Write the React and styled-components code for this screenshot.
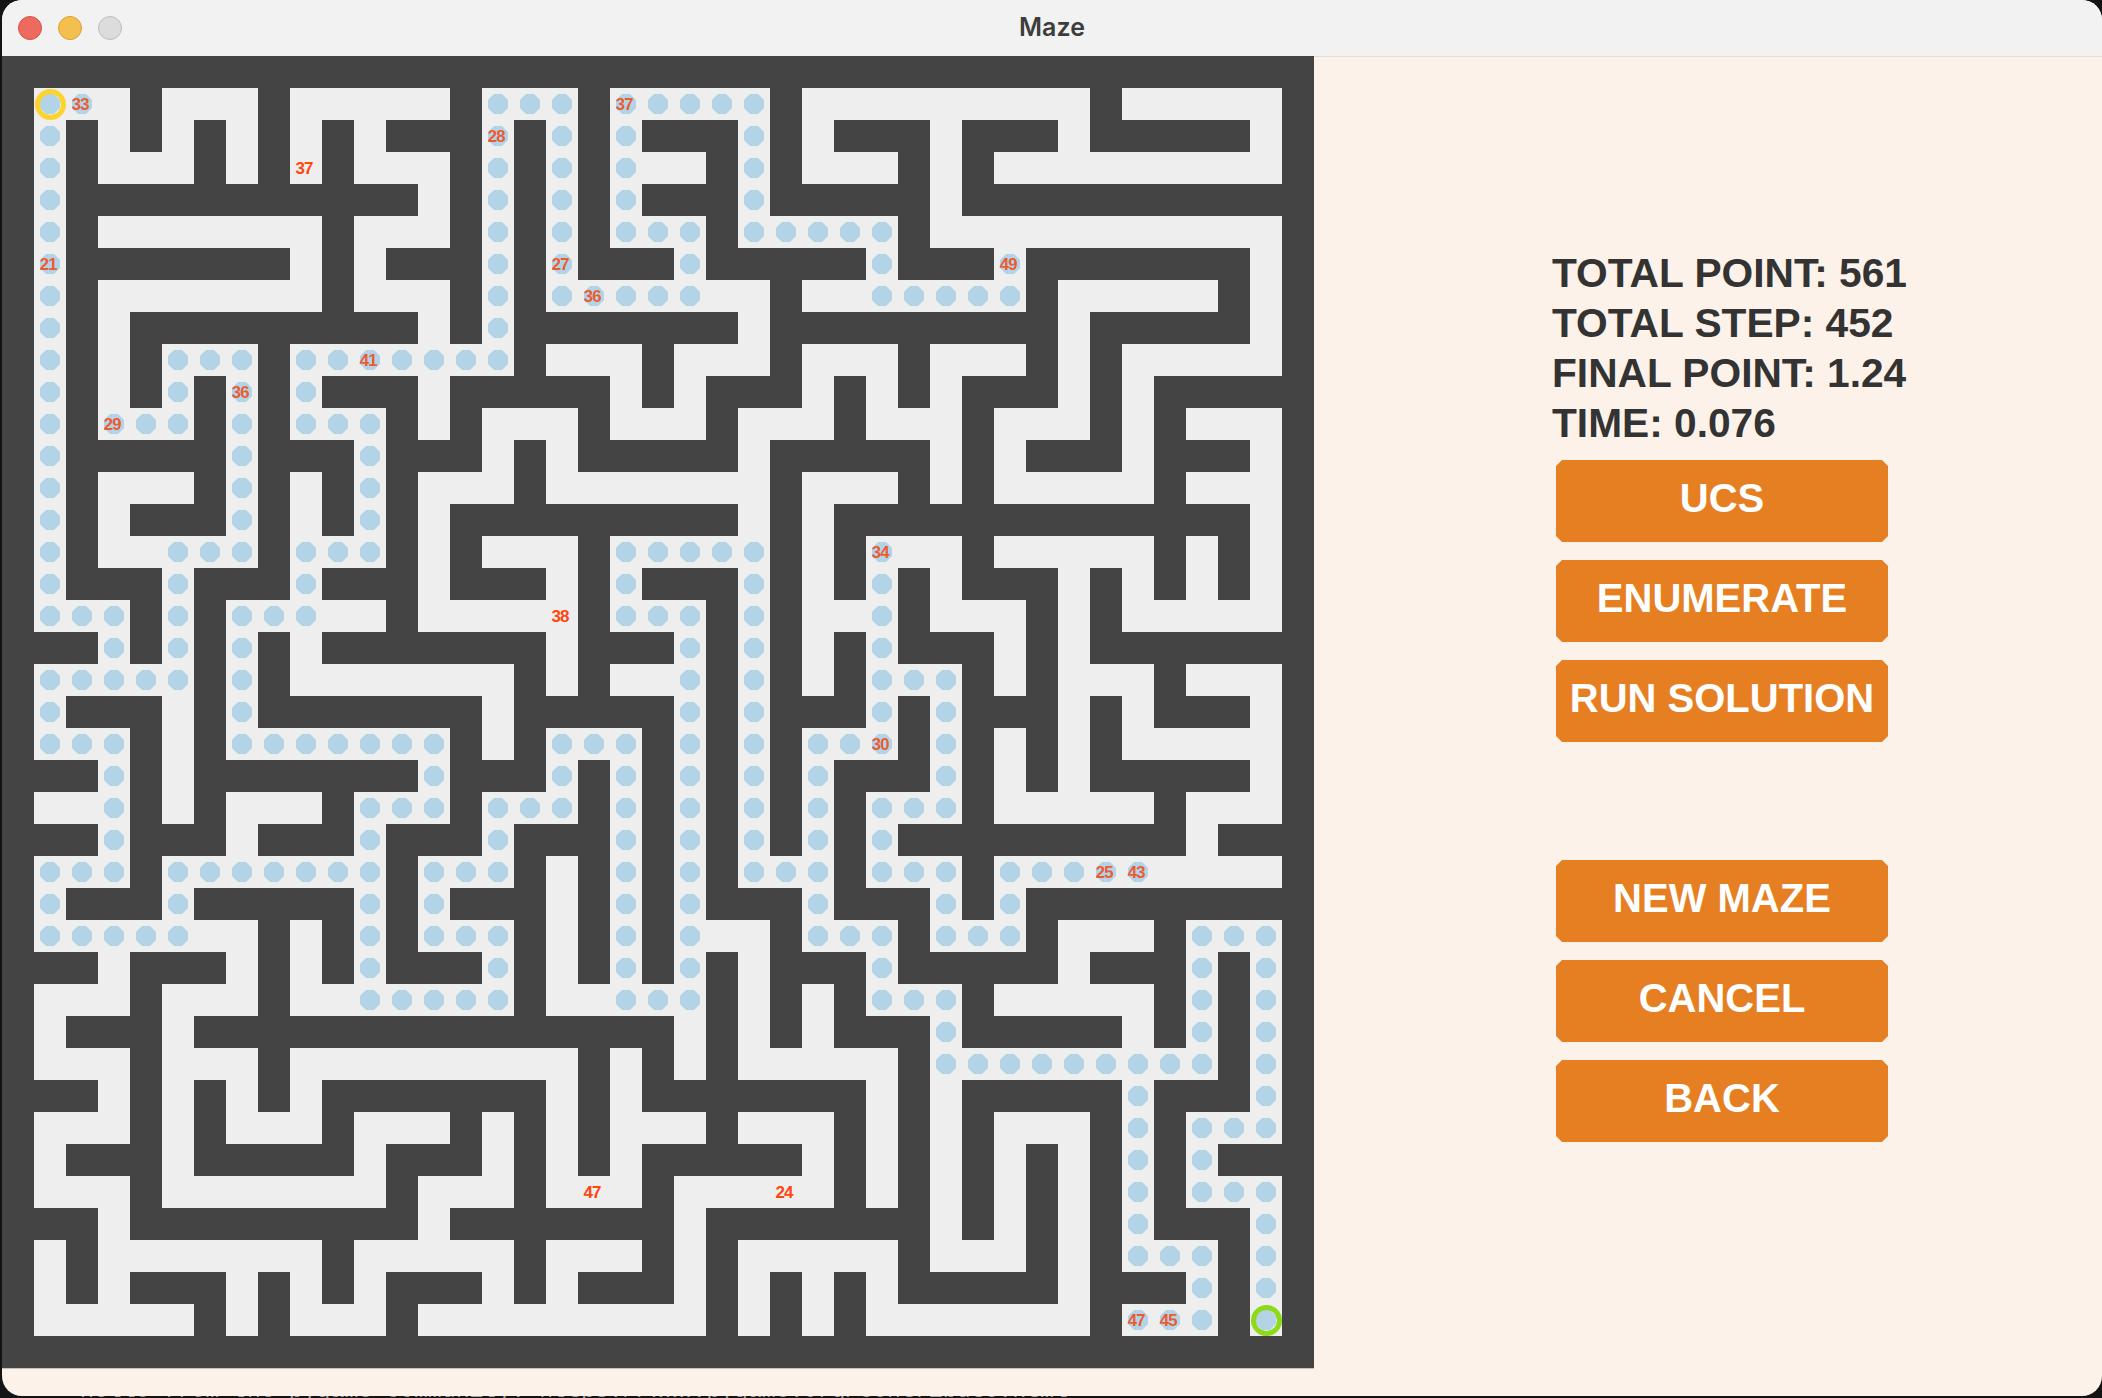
import React from 'react'
import styled, { createGlobalStyle } from 'styled-components'

const SIZE = 41

// open corridor cells per row, as column ranges
const openRows = {
  1: '1-3,5-7,9-13,15-17,19-23,25-33,35-39',
  2: '1,3,5,7,9,11,15,17,19,23,25,29,33,39',
  3: '1,3-5,7,9,11-13,15,17,19-21,23,25-27,29,31-39',
  4: '1,13,15,17,19,23,29',
  5: '1,3-9,11-13,15,17,19-21,23-27,29-39',
  6: '1,9,11,15,17,21,27,31,39',
  7: '1,3-9,11-13,15,17-23,25-31,33-37,39',
  8: '1,3,13,15,23,33,39',
  9: '1,3,5-7,9-15,17-19,21-23,25-27,29-31,33,35-39',
  10: '1,3,5,7,9,13,19,21,25,27,29,33,35',
  11: '1,3-5,7,9-11,13,15-17,19-21,23-25,27-29,31-33,35,37-39',
  12: '1,7,11,15,17,23,29,31,35,39',
  13: '1,3-5,7,9,11,13-15,17-23,25-27,29,31-35,37-39',
  14: '1,3,7,9,11,13,23,25,39',
  15: '1,3-7,9-11,13,15-17,19-23,25,27-29,31-35,37,39',
  16: '1,5,9,13,17,19,23,25,27,29,33,35,37,39',
  17: '1-3,5,7-11,13-17,19-21,23,25-27,29-31,33,35-39',
  18: '3,5,7,9,17,21,23,25,27,31,33',
  19: '1-5,7,9-15,17,19-21,23,25,27-29,31,33-35,37-39',
  20: '1,5,7,15,21,23,27,29,33,35,39',
  21: '1-3,5,7-13,15,17-19,21,23,25-27,29,31,33,35-39',
  22: '3,5,13,17,19,21,23,25,29,31,33,39',
  23: '1-3,5,7-9,11-13,15-17,19,21,23,25,27-29,31-35,37-39',
  24: '3,7,11,15,19,21,23,25,27,37',
  25: '1-3,5-11,13-15,17,19,21,23-25,27-29,31-39',
  26: '1,5,11,13,17,19,21,25,29,31',
  27: '1-7,9,11,13-15,17,19,21-23,25-27,29-31,33-35,37-39',
  28: '3,7,9,11,15,17,19,21,23,27,33,37,39',
  29: '1-3,5-7,9-15,17-21,23,25,27-29,31-35,37,39',
  30: '1,5,21,23,25,29,35,37,39',
  31: '1-3,5-7,9-17,19,21,23-27,29-37,39',
  32: '3,5,7,9,17,19,27,29,35,39',
  33: '1-3,5,7-9,11-13,15,17,19-21,23-25,27,29,31-33,35,37-39',
  34: '1,5,11,15,17,19,25,27,29,31,33,35,37',
  35: '1-3,5-11,13-15,17-19,21-25,27,29,31,33,35,37-39',
  36: '3,13,21,29,31,33,35,39',
  37: '1,3-9,11-15,17-19,21,23-27,29-31,33,35-37,39',
  38: '1,3,7,9,11,15,17,21,23,25,27,33,37,39',
  39: '1-5,7,9-11,13-21,23,25,27-33,35-37,39',
}

// cells the search visited
const visitedRows = {
  1: '1,2,15-17,19-23',
  2: '1,15,17,19,23',
  3: '1,15,17,19,23',
  4: '1,15,17,19,23',
  5: '1,15,17,19-21,23-27',
  6: '1,15,17,21,27,31',
  7: '1,15,17-21,27-31',
  8: '1,15',
  9: '1,5-7,9-15',
  10: '1,5,7,9',
  11: '1,3-5,7,9-11',
  12: '1,7,11',
  13: '1,7,11',
  14: '1,7,11',
  15: '1,5-7,9-11,19-23,27',
  16: '1,5,9,19,23,27',
  17: '1-3,5,7-9,19-21,23,27',
  18: '3,5,7,21,23,27',
  19: '1-5,7,21,23,27-29',
  20: '1,7,21,23,27,29',
  21: '1-3,7-13,17-19,21,23,25-27,29',
  22: '3,13,17,19,21,23,25,29',
  23: '3,11-13,15-17,19,21,23,25,27-29',
  24: '3,11,15,19,21,23,25,27',
  25: '1-3,5-11,13-15,19,21,23-25,27-29,31-35',
  26: '1,5,11,13,19,21,25,29,31',
  27: '1-5,11,13-15,19,21,25-27,29-31,37-39',
  28: '11,15,19,21,27,37,39',
  29: '11-15,19-21,27-29,37,39',
  30: '29,37,39',
  31: '29-37,39',
  32: '35,39',
  33: '35,37-39',
  34: '35,37',
  35: '35,37-39',
  36: '35,39',
  37: '35-37,39',
  38: '37,39',
  39: '35-37,39',
}

const pointsOnPath = {
  '1,2': 33, '2,15': 28, '1,19': 37, '6,1': 21, '6,17': 27, '7,18': 36, '6,31': 49, '9,11': 41,
  '10,7': 36, '11,3': 29, '15,27': 34, '21,27': 30, '25,34': 25, '25,35': 43, '39,35': 47, '39,36': 45,
}
const pointsOff = { '3,9': 37, '17,17': 38, '35,18': 47, '35,24': 24 }

const parseRanges = (text) => {
  const cols = new Set()
  text.split(',').forEach((part) => {
    const [a, b = a] = part.split('-').map(Number)
    for (let c = a; c <= b; c++) cols.add(c)
  })
  return cols
}

const cells = []
for (let r = 0; r < SIZE; r++) {
  const open = openRows[r] ? parseRanges(openRows[r]) : new Set()
  const visited = visitedRows[r] ? parseRanges(visitedRows[r]) : new Set()
  for (let c = 0; c < SIZE; c++) {
    cells.push({ key: `${r},${c}`, open: open.has(c), visited: visited.has(c) })
  }
}

const GlobalStyle = createGlobalStyle`
  html, body {
    margin: 0;
    height: 1398px;
    overflow: hidden;
    background: #141414;
  }
`

const Desktop = styled.div`
  position: relative;
  width: 2102px;
  height: 1398px;
  padding-left: 2px;
  box-sizing: border-box;
  overflow: hidden;
`

const TerminalLine = styled.div`
  position: absolute;
  left: 80px;
  top: 1380px;
  font: 23.2px/23px "Liberation Mono", monospace;
  color: #a0a0a0;
  white-space: pre;
`

const Window = styled.div`
  position: relative;
  width: 2100px;
  height: 1396px;
  border-radius: 20px;
  overflow: hidden;
  background: #fdf2e9;
`

const TitleBar = styled.div`
  height: 56px;
  display: flex;
  align-items: center;
  padding-left: 16px;
  background: #f2f2f2;
  position: relative;
`

const Lights = styled.div`
  display: flex;
  gap: 16px;
`

const Light = styled.span`
  width: 22px;
  height: 22px;
  border-radius: 50%;
  border: 1px solid ${(p) => p.$edge};
  background: ${(p) => p.$fill};
`

const Title = styled.div`
  position: absolute;
  left: 0;
  right: 0;
  top: 0;
  text-align: center;
  font: 600 25px/55px Inter, "Liberation Sans", sans-serif;
  color: #3d3d3d;
`

const Main = styled.div`
  display: flex;
  align-items: flex-start;
`

const Board = styled.div`
  flex: none;
  display: grid;
  grid-template-columns: repeat(${SIZE}, 32px);
  grid-auto-rows: 32px;
  background: #444444;
  box-shadow: 0 1px 0 #c9c0b8;
  filter: blur(0.5px);
`

const Cell = styled.div`
  position: relative;
  display: flex;
  align-items: center;
  justify-content: center;
  background: ${(p) => (p.$open ? '#eeeeee' : '#444444')};
`

const Dot = styled.span`
  width: 20px;
  height: 20px;
  background: #b3d3e7;
  clip-path: polygon(30% 0, 70% 0, 100% 30%, 100% 70%, 70% 100%, 30% 100%, 0 70%, 0 30%);
`

const Ring = styled.span`
  position: absolute;
  inset: 0.5px;
  border-radius: 50%;
  border: 5.5px solid ${(p) => p.$color};
  box-sizing: border-box;
`

const Point = styled.span`
  position: absolute;
  inset: 0;
  display: flex;
  align-items: center;
  justify-content: center;
  padding-right: 4px;
  font: bold 17px/1 "Liberation Sans", sans-serif;
  letter-spacing: -1px;
  color: ${(p) => (p.$bare ? '#ff4510' : '#ee5a30')};
`

const Panel = styled.div`
  flex: 1;
  display: flex;
  flex-direction: column;
  align-items: flex-start;
  padding: 192px 0 0 238px;
  font-family: "Liberation Sans", Arial, sans-serif;
  box-shadow: inset 0 1px 0 #e6dcd2;
`

const Stat = styled.div`
  font-size: 40.7px;
  font-weight: bold;
  line-height: 50px;
  color: #333333;
  white-space: nowrap;
`

const ButtonGroup = styled.div`
  display: flex;
  flex-direction: column;
  gap: 18px;
  margin: ${(p) => p.$top}px 0 0 4px;
`

const Button = styled.div`
  width: 332px;
  height: 82px;
  box-sizing: border-box;
  padding-bottom: 6px;
  display: flex;
  align-items: center;
  justify-content: center;
  background: #e67e22;
  color: #ffffff;
  font-size: 40px;
  font-weight: bold;
  clip-path: polygon(6px 0, calc(100% - 6px) 0, 100% 6px, 100% calc(100% - 6px), calc(100% - 6px) 100%, 6px 100%, 0 calc(100% - 6px), 0 6px);
`

const stats = ['TOTAL POINT: 561', 'TOTAL STEP: 452', 'FINAL POINT: 1.24', 'TIME: 0.076']

export default function App() {
  return (
    <Desktop>
      <GlobalStyle />
      <TerminalLine>Hello from the pygame community. https://www.pygame.org/contribute.html</TerminalLine>
      <Window>
        <TitleBar>
          <Lights>
            <Light $fill="#ee6a5f" $edge="#d0544a" />
            <Light $fill="#f5bf4f" $edge="#d9a033" />
            <Light $fill="#dcdcdc" $edge="#bdbdbd" />
          </Lights>
          <Title>Maze</Title>
        </TitleBar>
        <Main>
          <Board>
            {cells.map(({ key, open, visited }) => (
              <Cell key={key} $open={open}>
                {visited && <Dot />}
                {key === '1,1' && <Ring $color="#fdd42e" />}
                {key === '39,39' && <Ring $color="#8fd91c" />}
                {pointsOnPath[key] && <Point>{pointsOnPath[key]}</Point>}
                {pointsOff[key] && <Point $bare>{pointsOff[key]}</Point>}
              </Cell>
            ))}
          </Board>
          <Panel>
            {stats.map((line) => (
              <Stat key={line}>{line}</Stat>
            ))}
            <ButtonGroup $top={12}>
              <Button>UCS</Button>
              <Button>ENUMERATE</Button>
              <Button>RUN SOLUTION</Button>
            </ButtonGroup>
            <ButtonGroup $top={118}>
              <Button>NEW MAZE</Button>
              <Button>CANCEL</Button>
              <Button>BACK</Button>
            </ButtonGroup>
          </Panel>
        </Main>
      </Window>
    </Desktop>
  )
}
